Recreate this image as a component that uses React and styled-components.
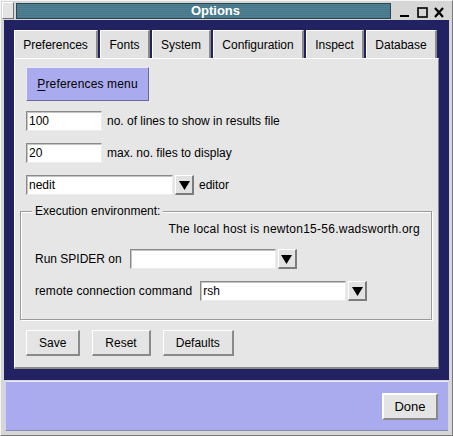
import React from "react";
import styled, { createGlobalStyle } from "styled-components";

const Global = createGlobalStyle`
  html, body { margin: 0; padding: 0; background: #d8d8d8; }
  * { box-sizing: border-box; }
  body { font-family: "Liberation Sans", Arial, sans-serif; font-size: 12px; color: #000; }
`;

const Window = styled.div`
  width: 453px;
  height: 436px;
  background: #d6d6d6;
  display: flex;
  flex-direction: column;
  border-left: 1px solid #f4f4f4;
  border-top: 1px solid #f4f4f4;
  border-right: 1px solid #7a7a7a;
  border-bottom: 1px solid #7a7a7a;
`;

const TitleBar = styled.div`
  height: 19px;
  display: flex;
  align-items: flex-start;
  padding: 1px 1px 0 1px;
  gap: 2px;
`;

const MenuBox = styled.div`
  width: 17px;
  height: 17px;
  background: #e4e4e4;
  border-top: 1px solid #fff;
  border-left: 1px solid #fff;
  border-right: 1px solid #707070;
  border-bottom: 1px solid #707070;
`;

const TitleStrip = styled.div`
  flex: 0 0 375px;
  height: 16px;
  margin-top: 1px;
  background: repeating-linear-gradient(180deg, #4f7f90 0px, #4f7f90 1px, #47778a 1px, #47778a 2px);
  border: 1px solid #2a4654;
  color: #fff;
  font-weight: bold;
  font-size: 13px;
  line-height: 14px;
  text-align: center;
  padding-left: 24px;
`;

const Controls = styled.div`
  flex: 1;
  height: 18px;
  display: flex;
  align-items: center;
  padding-left: 3px;
`;

const Body = styled.div`
  height: 360px;
  margin: 0 3px;
  background: #222262;
  padding: 10px 10px 11px 10px;
  display: flex;
  flex-direction: column;
`;

const TabRow = styled.div`
  display: flex;
  gap: 2px;
  height: 28px;
`;

const Tab = styled.div`
  width: ${(p) => p.$w}px;
  height: 28px;
  background: #e2e2e2;
  border-top: 1px solid #fff;
  border-left: 1px solid #fff;
  border-right: 2px solid #8a8a8a;
  display: flex;
  align-items: center;
  justify-content: center;
  font-size: 12px;
  padding-top: 1px;
`;

const Panel = styled.div`
  flex: 1;
  background: #e6e6e6;
  border-top: 1px solid #fff;
  border-left: 1px solid #fff;
  border-right: 1px solid #8a8a8a;
  border-bottom: 2px solid #8a8a8a;
  padding: 8px 6px 0 5px;
  display: flex;
  flex-direction: column;
`;

const Row = styled.div`
  display: flex;
  align-items: center;
  gap: ${(p) => (p.$gap != null ? p.$gap : 5)}px;
  margin-top: ${(p) => p.$mt || 0}px;
  margin-left: ${(p) => (p.$ml != null ? p.$ml : 6)}px;
`;

const MenuButton = styled.div`
  width: 123px;
  height: 34px;
  background: #aaaaee;
  border-top: 1px solid #e8e8ff;
  border-left: 1px solid #e8e8ff;
  border-right: 1px solid #6a6a9a;
  border-bottom: 1px solid #6a6a9a;
  display: flex;
  align-items: center;
  justify-content: center;
  font-size: 12px;
  letter-spacing: 0.15px;
  u { text-decoration: underline; text-underline-offset: 2px; }
`;

const Entry = styled.div`
  width: ${(p) => p.$w}px;
  height: 20px;
  background: #fff;
  border-top: 1px solid #8a8a8a;
  border-left: 1px solid #8a8a8a;
  border-right: 1px solid #ececec;
  border-bottom: 1px solid #ececec;
  box-shadow: inset 1px 1px 0 #c4c4c4;
  padding: 0 2px;
  display: flex;
  align-items: center;
  font-size: 12px;
`;

const ArrowButton = styled.div`
  width: 19px;
  height: 20px;
  margin-left: ${(p) => (p.$ml != null ? p.$ml : -3)}px;
  background: #e2e2e2;
  border-top: 1px solid #fff;
  border-left: 1px solid #fff;
  border-right: 2px solid #7c7c7c;
  border-bottom: 2px solid #7c7c7c;
  display: flex;
  align-items: center;
  justify-content: center;
`;

const Label = styled.span`
  font-size: 12px;
  white-space: nowrap;
  letter-spacing: ${(p) => p.$ls || 0}px;
`;

const Frame = styled.fieldset`
  margin: 9px 0 0 0;
  padding: 4px 11px 18px 14px;
  border: 1px solid #9a9a9a;
  box-shadow: 1px 1px 0 #fff, inset 1px 1px 0 #fff;
  display: flex;
  flex-direction: column;
  min-width: 0;
`;

const Legend = styled.legend`
  padding: 0 3px;
  margin-left: -3px;
  font-size: 12px;
  line-height: 14px;
  background: #e6e6e6;
`;

const Host = styled.div`
  text-align: right;
  font-size: 12px;
  line-height: 14px;
  letter-spacing: 0.25px;
`;

const Button = styled.div`
  min-width: ${(p) => p.$min || 0}px;
  height: ${(p) => p.$h || 26}px;
  padding: 0 12px;
  background: #e4e4e4;
  border-top: 1px solid #fff;
  border-left: 1px solid #fff;
  border-right: 2px solid #8a8a8a;
  border-bottom: 2px solid #8a8a8a;
  display: flex;
  align-items: center;
  justify-content: center;
  font-size: ${(p) => p.$fs || 12}px;
`;

const Footer = styled.div`
  height: 50px;
  margin: 1px 4px 0 4px;
  background: #aaaaee;
  border-top: 1px solid #e8e8ff;
  border-left: 1px solid #d0d0f8;
  border-bottom: 1px solid #8a8ab8;
  display: flex;
  align-items: center;
  justify-content: flex-end;
  padding-right: 10px;
`;

const DoneButton = styled(Button)`
  border-top: 2px solid #fff;
  border-left: 2px solid #fff;
  padding: 0 10px;
`;

const Triangle = () => (
  <svg width="11" height="10" viewBox="0 0 11 10">
    <polygon points="0,1 11,1 5.5,10" fill="#000" />
  </svg>
);

const WinControls = () => (
  <svg width="55" height="18" viewBox="0 0 55 18">
    <rect x="4" y="13" width="9" height="2" fill="#000" />
    <rect x="22" y="6" width="9" height="9" fill="none" stroke="#000" strokeWidth="1.6" />
    <path d="M39 6 L47 15 M47 6 L39 15" stroke="#000" strokeWidth="2.2" />
  </svg>
);

const tabs = [
  ["Preferences", 84],
  ["Fonts", 50],
  ["System", 59],
  ["Configuration", 91],
  ["Inspect", 58],
  ["Database", 71],
];

export default function App() {
  return (
    <>
      <Global />
      <Window>
        <TitleBar>
          <MenuBox />
          <TitleStrip>Options</TitleStrip>
          <Controls>
            <WinControls />
          </Controls>
        </TitleBar>
        <Body>
          <TabRow>
            {tabs.map(([t, w]) => (
              <Tab key={t} $w={w}>{t}</Tab>
            ))}
          </TabRow>
          <Panel>
            <Row>
              <MenuButton>
                <span><u>P</u>references menu</span>
              </MenuButton>
            </Row>
            <Row $mt={10}>
              <Entry $w={76}>100</Entry>
              <Label>no. of lines to show in results file</Label>
            </Row>
            <Row $mt={12}>
              <Entry $w={76}>20</Entry>
              <Label>max. no. files to display</Label>
            </Row>
            <Row $mt={12} $gap={5}>
              <Entry $w={147}>nedit</Entry>
              <ArrowButton><Triangle /></ArrowButton>
              <Label>editor</Label>
            </Row>
            <Frame>
              <Legend>Execution environment:</Legend>
              <Host>The local host is newton15-56.wadsworth.org</Host>
              <Row $mt={13} $ml={0} $gap={8}>
                <Label>Run SPIDER on</Label>
                <Entry $w={146} />
                <ArrowButton $ml={-6}><Triangle /></ArrowButton>
              </Row>
              <Row $mt={12} $ml={0} $gap={8}>
                <Label $ls={0.1}>remote connection command</Label>
                <Entry $w={146}>rsh</Entry>
                <ArrowButton $ml={-6}><Triangle /></ArrowButton>
              </Row>
            </Frame>
            <Row $mt={10} $gap={12}>
              <Button $min={53}>Save</Button>
              <Button $min={55}>Reset</Button>
              <Button $min={69}>Defaults</Button>
            </Row>
          </Panel>
        </Body>
        <Footer>
          <DoneButton $h={27} $fs={13} $min={56}>Done</DoneButton>
        </Footer>
      </Window>
    </>
  );
}
